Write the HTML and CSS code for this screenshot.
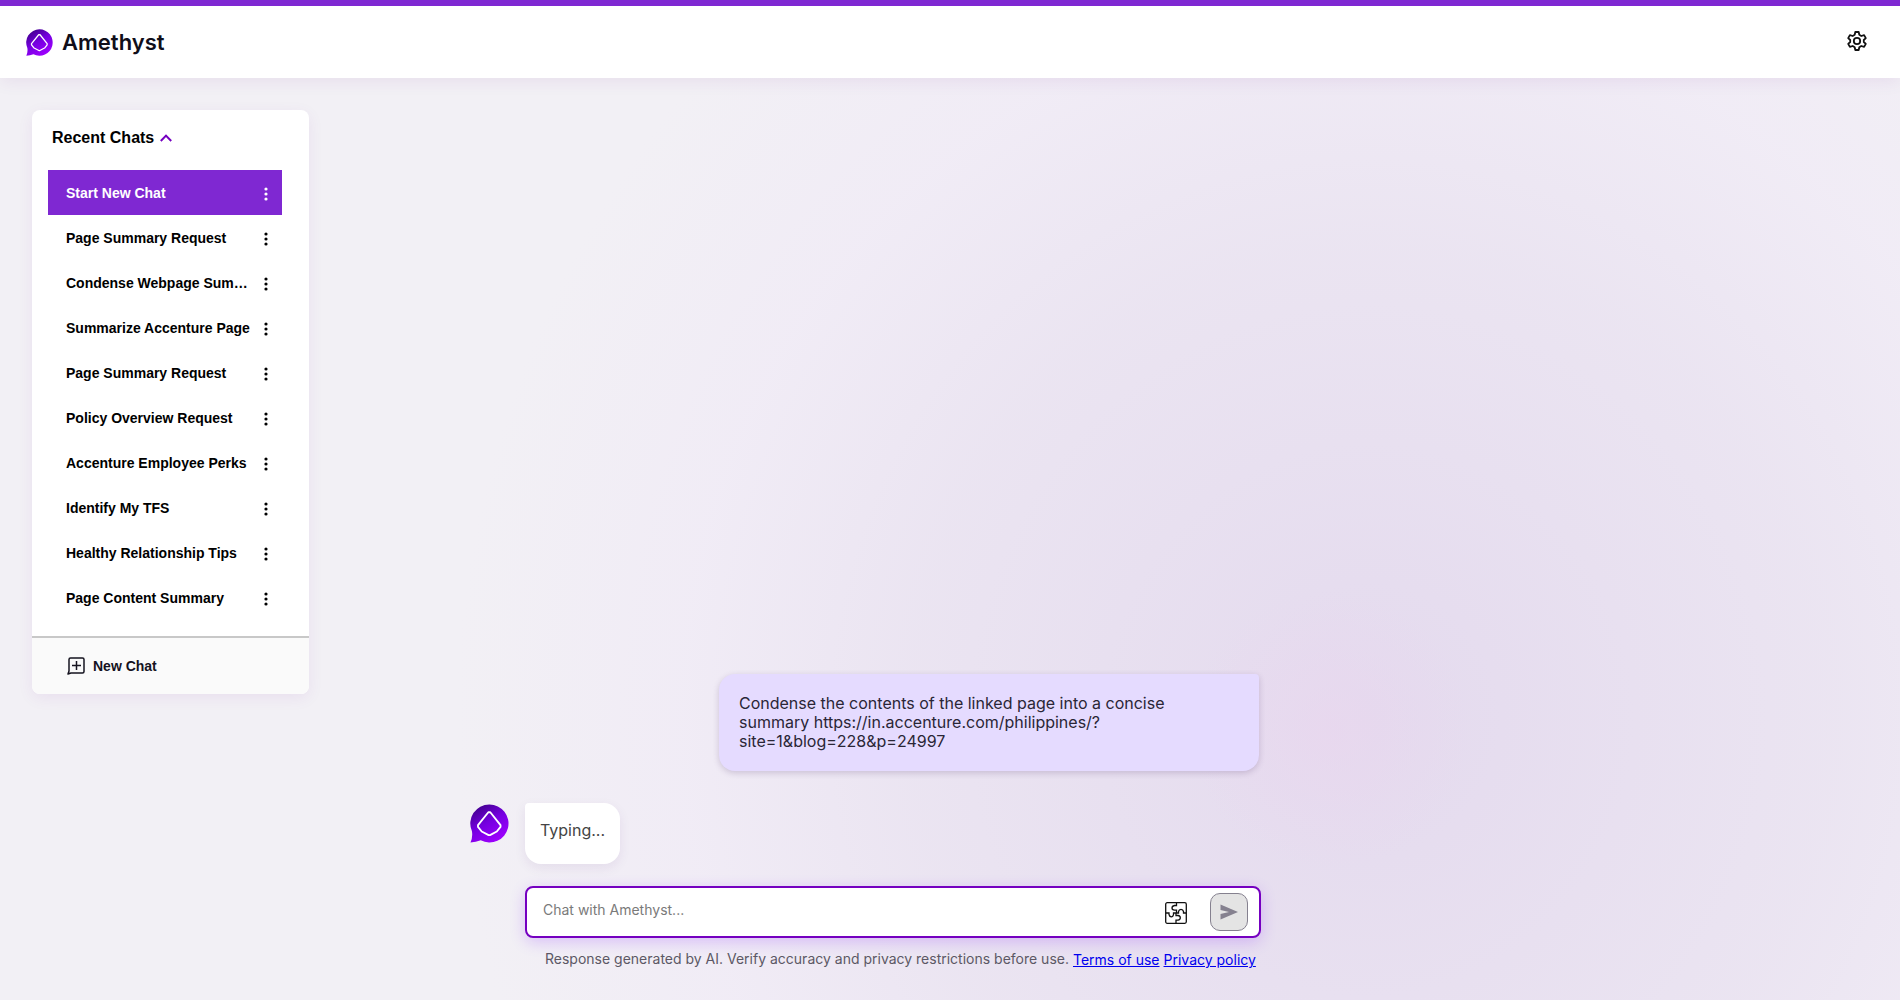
FILE: index.html
```html
<!DOCTYPE html>
<html lang="en">
<head>
<meta charset="utf-8">
<title>Amethyst</title>
<meta name="viewport" content="width=device-width, initial-scale=1">
<link rel="stylesheet" href="styles.css">
</head>
<body>
<svg class="defs" width="0" height="0" aria-hidden="true">
  <defs>
    <linearGradient id="gem" x1="0.1" y1="0" x2="0.7" y2="1">
      <stop offset="0" stop-color="#3a0080"/>
      <stop offset="0.5" stop-color="#7500e0"/>
      <stop offset="1" stop-color="#a000ff"/>
    </linearGradient>
    <symbol id="logo" viewBox="0 0 40 40">
      <path fill="url(#gem)" d="M20 .5A19.5 19.5 0 1 1 11 37.300Q6 39.500.5 39.500Q3 34 2 28A19.500 19.500 0 0 1 20 .5Z"/>
      <path fill="none" stroke="#fff" stroke-width="1.900" stroke-linejoin="round" d="M18.800 8.500H20.800L31.300 21.600V23.500L27.500 28.200L20.500 31.900H19.100L12 28.200L8.200 23.500V21.600Z"/>
    </symbol>
    <symbol id="dots" viewBox="0 0 4 14">
      <circle cx="2" cy="2" r="1.600"/><circle cx="2" cy="7" r="1.600"/><circle cx="2" cy="12" r="1.600"/>
    </symbol>
  </defs>
</svg>

<header class="topbar">
  <a class="brand" href="#">
    <svg class="brand-mark" aria-hidden="true"><use href="#logo"/></svg>
    <span>Amethyst</span>
  </a>
  <button class="icon-button" aria-label="Settings">
    <svg width="24" height="24" viewBox="0 0 24 24" fill="none" stroke="#111" stroke-width="1.800" stroke-linejoin="round">
      <path d="M10.300 3h3.400l.6 2.800 2 1.200 2.800-.9 1.700 3-2 1.900v2l2 1.900-1.700 3-2.800-.9-2 1.200-.6 2.800h-3.400l-.6-2.800-2-1.200-2.800.9-1.700-3 2-1.900v-2l-2-1.900 1.700-3 2.800.9 2-1.200z"/>
      <circle cx="12" cy="12" r="3.200"/>
    </svg>
  </button>
</header>

<main class="layout">
  <aside class="sidebar">
    <button class="recent">Recent Chats
      <svg width="12" height="8" viewBox="0 0 12 8" fill="none" stroke="#7500c0" stroke-width="2"><path d="M.8 7 6 1.600 11.200 7"/></svg>
    </button>
    <ul class="chats">
      <li class="chat active"><a href="#">Start New Chat</a><button aria-label="Options"><svg><use href="#dots"/></svg></button></li>
      <li class="chat"><a href="#">Page Summary Request</a><button aria-label="Options"><svg><use href="#dots"/></svg></button></li>
      <li class="chat"><a href="#">Condense Webpage Sum…</a><button aria-label="Options"><svg><use href="#dots"/></svg></button></li>
      <li class="chat"><a href="#">Summarize Accenture Page</a><button aria-label="Options"><svg><use href="#dots"/></svg></button></li>
      <li class="chat"><a href="#">Page Summary Request</a><button aria-label="Options"><svg><use href="#dots"/></svg></button></li>
      <li class="chat"><a href="#">Policy Overview Request</a><button aria-label="Options"><svg><use href="#dots"/></svg></button></li>
      <li class="chat"><a href="#">Accenture Employee Perks</a><button aria-label="Options"><svg><use href="#dots"/></svg></button></li>
      <li class="chat"><a href="#">Identify My TFS</a><button aria-label="Options"><svg><use href="#dots"/></svg></button></li>
      <li class="chat"><a href="#">Healthy Relationship Tips</a><button aria-label="Options"><svg><use href="#dots"/></svg></button></li>
      <li class="chat"><a href="#">Page Content Summary</a><button aria-label="Options"><svg><use href="#dots"/></svg></button></li>
    </ul>
    <button class="new-chat">
      <svg width="18" height="18" viewBox="0 0 18 18" fill="none" stroke="#15131f" stroke-width="1.500" stroke-linejoin="round"><path d="M1 17 2 14V2.500Q2 1 3.500 1h12Q17 1 17 2.500v12Q17 16 15.500 16H4ZM9.500 4v9M5 8.500h9"/></svg>
      New Chat
    </button>
  </aside>

  <section class="conversation">
    <p class="bubble user">Condense the contents of the linked page into a concise summary https://in.accenture.com/philippines/?<wbr>site=1&amp;blog=228&amp;p=24997</p>
    <div class="reply">
      <svg class="avatar" aria-hidden="true"><use href="#logo"/></svg>
      <p class="bubble bot">Typing...</p>
    </div>
    <form class="composer">
      <input type="text" placeholder="Chat with Amethyst..." aria-label="Chat with Amethyst">
      <button type="button" class="icon-button" aria-label="Plugins">
        <svg width="22" height="22" viewBox="0 0 22 22" fill="none" stroke="#111" stroke-width="1.300"><rect x=".7" y=".7" width="20.600" height="20.600" rx="1.500"/><path d="M11.500 1v2.500H9.500Q7 4 7 6T9.500 8.200H11.500V11M1 11h3v1.500Q4.500 14.800 6.300 14.800T8.500 12.500V11H13.500V9.500Q14 7.300 16 7.300T18.500 9.500V11H21M11 21v-2.800H13Q15.300 17.800 15.300 15.800T13 13.500H11V11"/></svg>
      </button>
      <button type="button" class="send" aria-label="Send">
        <svg width="18" height="16" viewBox="0 0 18 16" fill="#85818f"><path d="M.5.500 18 8 .5 15.500V10L9 8 .5 6Z"/></svg>
      </button>
    </form>
    <footer class="notice">
      <span>Response generated by AI. Verify accuracy and privacy restrictions before use.</span>
      <a href="#">Terms of use</a>
      <a href="#">Privacy policy</a>
    </footer>
  </section>
</main>
</body>
</html>
```
FILE: styles.css
```css
* { box-sizing: border-box; }

body {
  display: flex;
  flex-direction: column;
  min-height: 100vh;
  margin: 0;
  color: #15131f;
  font-family: Inter, "Liberation Sans", sans-serif;
  font-size: 16px;
  background:
    radial-gradient(circle at 70% 73%, rgba(234, 214, 238, 0.6), rgba(234, 214, 238, 0) 140px),
    radial-gradient(ellipse 48% 95% at 72% 72%, #e4daee, rgba(234, 227, 241, 0.9) 50%, rgba(240, 234, 246, 0.7) 75%, rgba(242, 240, 246, 0)),
    #f2f0f5;
}

button {
  padding: 0;
  border: 0;
  background: none;
  color: inherit;
  font: inherit;
  cursor: pointer;
}

.defs { position: absolute; }

.topbar {
  display: flex;
  align-items: center;
  justify-content: space-between;
  height: 78px;
  padding: 0 31px 0 26px;
  border-top: 6px solid #7f28d2;
  background: #fff;
  box-shadow: 0 4px 16px rgba(100, 20, 130, 0.07);
}

.topbar .icon-button { padding-bottom: 2px; }

.brand {
  display: flex;
  align-items: center;
  gap: 9px;
  color: #100e1a;
  font-size: 22px;
  font-weight: 600;
  text-decoration: none;
}

.brand-mark { width: 27px; height: 27px; }

.icon-button { display: flex; }

.layout {
  display: flex;
  flex: 1;
  align-items: flex-start;
  padding: 32px 32px 30px;
}

.sidebar {
  display: flex;
  flex-direction: column;
  flex: 0 0 277px;
  overflow: hidden;
  border-radius: 8px;
  background: #fff;
  box-shadow: 0 4px 16px rgba(120, 20, 160, 0.07);
  font-family: "Liberation Sans", Arial, sans-serif;
  font-size: 14px;
  font-weight: 700;
}

.recent {
  display: flex;
  align-items: center;
  gap: 6px;
  height: 60px;
  padding: 0 20px 4px;
  color: #000;
  font-size: 16px;
}

.chats {
  margin: 0;
  padding: 0 27px 16px 16px;
  list-style: none;
}

.chat {
  display: flex;
  align-items: center;
  gap: 10px;
  height: 45px;
  padding: 0 14px 0 18px;
  color: #000;
}

.chat a {
  flex: 1;
  color: inherit;
  line-height: 20px;
  text-decoration: none;
  white-space: nowrap;
}

.chat button { display: flex; padding-top: 2px; }
.chat svg { width: 4px; height: 14px; fill: currentColor; }
.chat.active { background: #7f28d2; color: #fff; }

.new-chat {
  display: flex;
  align-items: center;
  gap: 8px;
  height: 58px;
  padding: 0 35px;
  border-top: 2px solid #c8c8c8;
  background: #fafafa;
}

.conversation {
  display: flex;
  flex: 0 1 791px;
  flex-direction: column;
  justify-content: flex-end;
  align-self: stretch;
  min-width: 0;
  margin-left: 161px;
}

.bubble { margin: 0; line-height: 19px; }

.user {
  align-self: flex-end;
  width: 540px;
  max-width: 100%;
  margin: 0 2px 32px 0;
  padding: 20px 60px 20px 20px;
  border-radius: 16px 4px 16px 16px;
  background: #e5dbff;
  box-shadow: 0 2px 6px rgba(60, 30, 90, 0.2);
  color: #2a2636;
}

.reply { display: flex; gap: 16px; margin-bottom: 22px; }
.avatar { width: 39px; height: 39px; margin-top: 1px; }

.bot {
  height: 61px;
  padding: 18px 15px;
  border-radius: 4px 16px 16px 16px;
  background: #fff;
  box-shadow: 0 4px 12px rgba(80, 20, 120, 0.08);
  color: #444;
}

.composer {
  display: flex;
  align-items: center;
  height: 52px;
  margin-left: 55px;
  padding: 0 11px 0 16px;
  border: 2px solid #7500c0;
  border-radius: 8px;
  background: #fff;
  box-shadow: 0 4px 16px rgba(117, 0, 255, 0.2);
}

.composer input {
  flex: 1;
  min-width: 0;
  padding: 0 0 6px;
  border: 0;
  outline: 0;
  background: none;
  font: 14px Inter, "Liberation Sans", sans-serif;
}

.composer input::placeholder { color: #7a7a7a; }

.composer .icon-button { padding-top: 2px; }

.send {
  display: flex;
  align-items: center;
  justify-content: center;
  width: 38px;
  height: 38px;
  margin-left: 23px;
  border: 1px solid #85818f;
  border-radius: 10px;
  background: #e4e4e4;
}

.notice {
  display: flex;
  flex-wrap: wrap;
  gap: 0 4px;
  margin: 11px 0 0 75px;
  color: #5c5865;
  font-size: 14px;
  line-height: 20px;
}

.notice a { padding-top: 1px; color: #00e; }
```
